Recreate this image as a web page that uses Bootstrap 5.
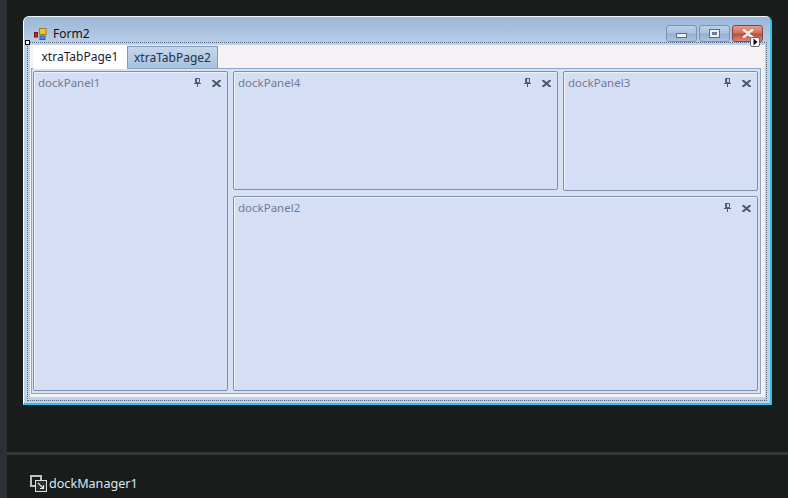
<!DOCTYPE html>
<html><head><meta charset="utf-8">
<link href="https://cdn.jsdelivr.net/npm/bootstrap@5.3.0/dist/css/bootstrap.min.css" rel="stylesheet">
<style>
html,body{margin:0;height:498px;overflow:hidden;background:#181c1a;font-family:"Noto Sans",sans-serif;font-size:12px;line-height:1}
.stage{width:788px;height:498px}
.rail{width:7px;background:#2d3036;flex:none}
.work{flex:1;min-width:0}
.canvasarea{height:452px;padding:16px 16px 0 16px;flex:none}
.divider{height:3px;background:#34383c;flex:none}
.tray{height:43px;padding:20px 0 0 23px;color:#dce8f4;font-size:12.6px;gap:2px}
.frm{width:749px;height:389px;position:relative;background:#bfd2ea;border:1px solid #1b1b1b;border-left-color:#fff;border-top-color:#eef3f9;border-right:2px solid #2cc4ea;border-bottom:2px solid #2cc4ea;border-radius:6px 6px 0 0}
.ttl{height:25px;padding:0 7px 0 10px;background:linear-gradient(#9ab6d6,#b9cde5);color:#111;font-size:12px;border-radius:5px 5px 0 0}
.ttltext{padding-top:8px;gap:6px}
.capset{gap:2px}
.capbtn{width:31px;height:17px;border:1px solid #7d93b1;border-radius:3px;background:linear-gradient(#b9cfe7 0%,#a9c2de 48%,#93b0d2 52%,#aac4e0 100%)}
.capbtn.cl{background:linear-gradient(#e69a8a 0%,#d0705e 48%,#b84a3a 52%,#d98878 100%);border-color:#7a4a4a}
.bodyarea{margin:0 3px 0 2px;height:359px;border:1px dotted #5a6680;padding:2px 1px 3px 2px;background:#bfd2ea;margin-left:3px}
.sheet{height:352px;background:#f5f2f6;padding-left:1px}
.tabrow{height:23px;padding-left:2px;align-items:flex-end;position:relative}
.tb{height:24px;display:flex;align-items:center;justify-content:center;color:#1a2230;margin-bottom:-1px;position:relative}
.tb.on{width:94px;background:#fff;z-index:1}
.tb.off{width:91px;height:22px;margin-bottom:0;background:linear-gradient(#c6d6ec,#a9c1de);border:1px solid #7f9abb;border-bottom:0;color:#24324a}
.pagebox{background:#d8e0f6;border:1px solid #8ea6c6;width:730px;height:326px;padding:2px 2px 0 1px}
.dockgrid{display:grid;grid-template-columns:195px 325px 195px;grid-template-rows:120px 195px;gap:5px}
.dp{background:#d6def6;border:1px solid #7e90aa;border-radius:2px;box-shadow:inset 1px 1px 0 #eef2fc;padding:4px 6px 0 4px;color:#6f7c94;font-size:11.5px}
.p1{grid-row:1 / span 2}
.p2{grid-column:2 / span 2}
.p4{margin-bottom:1px}
.dphead{height:14px}
.pin{margin-left:auto;margin-top:-1px}
.xx{margin-left:11px}
.handle{position:absolute;width:5px;height:5px;background:#fff;border:1px solid #000;left:1px;top:23px}
.glyph{position:absolute;left:726px;top:20px;width:10px;height:10px;background:#fff;border:1px solid #666;border-radius:2px}
.glyph svg,.capbtn svg,.dp svg,.trayicon{display:block}
</style></head><body>
<div class="stage d-flex">
<div class="rail"></div>
<div class="work d-flex flex-column">
<div class="canvasarea">
<div class="frm">
<div class="ttl d-flex justify-content-between">
<div class="ttltext d-flex align-items-center">
<svg width="13" height="12" viewBox="0 0 13 12"><rect x="5.5" y=".5" width="6.5" height="6" fill="#f2c230" stroke="#a8801a"/><rect x=".5" y="4.5" width="3" height="4.5" fill="#c8281c" stroke="#7a1a12"/><rect x="6" y="8" width="5" height="3.5" fill="#4d90dc" stroke="#2a60a0"/></svg>
<span>Form2</span>
</div>
<div class="capset d-flex align-self-end">
<div class="capbtn d-flex align-items-center justify-content-center"><svg class="mt-1" width="11" height="5"><rect x=".5" y=".5" width="10" height="4" fill="#eef0f3" stroke="#5c6a80"/></svg></div>
<div class="capbtn d-flex align-items-center justify-content-center"><svg width="11" height="9"><rect x=".5" y=".5" width="10" height="8" fill="#eef0f3" stroke="#5c6a80"/><rect x="3" y="3" width="5" height="3" fill="#6b7c96"/></svg></div>
<div class="capbtn cl d-flex align-items-center justify-content-center"><svg width="12" height="9"><path d="M1 .5 6 4 11 .5M1 8.5 6 5 11 8.5" stroke="#eee" stroke-width="2.4" fill="none"/></svg></div>
</div>
</div>
<div class="bodyarea">
<div class="sheet">
<div class="tabrow d-flex">
<div class="tb on">xtraTabPage1</div>
<div class="tb off">xtraTabPage2</div>
</div>
<div class="pagebox">
<div class="dockgrid">
<div class="dp p1"><div class="dphead d-flex align-items-center"><span>dockPanel1</span><svg class="pin" width="7" height="9" viewBox="0 0 7 9"><path d="M1.5 .5h4v4h-4zM2.5 1v3.5M0 5.5h7M3.5 5v4" stroke="#4d5a76" fill="none"/></svg><svg class="xx" width="9" height="7" viewBox="0 0 9 7"><path d="M.5 0 8.5 7M8.5 0 .5 7" stroke="#4d5a76" stroke-width="2" fill="none"/></svg></div></div>
<div class="dp p4"><div class="dphead d-flex align-items-center"><span>dockPanel4</span><svg class="pin" width="7" height="9" viewBox="0 0 7 9"><path d="M1.5 .5h4v4h-4zM2.5 1v3.5M0 5.5h7M3.5 5v4" stroke="#4d5a76" fill="none"/></svg><svg class="xx" width="9" height="7" viewBox="0 0 9 7"><path d="M.5 0 8.5 7M8.5 0 .5 7" stroke="#4d5a76" stroke-width="2" fill="none"/></svg></div></div>
<div class="dp"><div class="dphead d-flex align-items-center"><span>dockPanel3</span><svg class="pin" width="7" height="9" viewBox="0 0 7 9"><path d="M1.5 .5h4v4h-4zM2.5 1v3.5M0 5.5h7M3.5 5v4" stroke="#4d5a76" fill="none"/></svg><svg class="xx" width="9" height="7" viewBox="0 0 9 7"><path d="M.5 0 8.5 7M8.5 0 .5 7" stroke="#4d5a76" stroke-width="2" fill="none"/></svg></div></div>
<div class="dp p2"><div class="dphead d-flex align-items-center"><span>dockPanel2</span><svg class="pin" width="7" height="9" viewBox="0 0 7 9"><path d="M1.5 .5h4v4h-4zM2.5 1v3.5M0 5.5h7M3.5 5v4" stroke="#4d5a76" fill="none"/></svg><svg class="xx" width="9" height="7" viewBox="0 0 9 7"><path d="M.5 0 8.5 7M8.5 0 .5 7" stroke="#4d5a76" stroke-width="2" fill="none"/></svg></div></div>
</div>
</div>
</div>
</div>
<div class="handle"></div>
<div class="glyph"><svg width="8" height="8"><path d="M2.5 .5 6.5 4 2.5 7.5z" fill="#000"/></svg></div>
</div>
</div>
<div class="divider"></div>
<div class="tray d-flex align-items-start">
<svg class="trayicon" width="17" height="17" viewBox="0 0 17 17"><rect x="1" y="1" width="10" height="10" fill="none" stroke="#bcc0c4" stroke-width="2"/><rect x="5.5" y="5.5" width="11" height="11" fill="#2a2e2e" stroke="#dfe2e4"/><path d="M8 8 13.5 13.5M13.5 10v3.5H10" stroke="#e6e8ea" fill="none" stroke-width="1.2"/></svg>
<span class="mt-1">dockManager1</span>
</div>
</div>
</div>
</body></html>
